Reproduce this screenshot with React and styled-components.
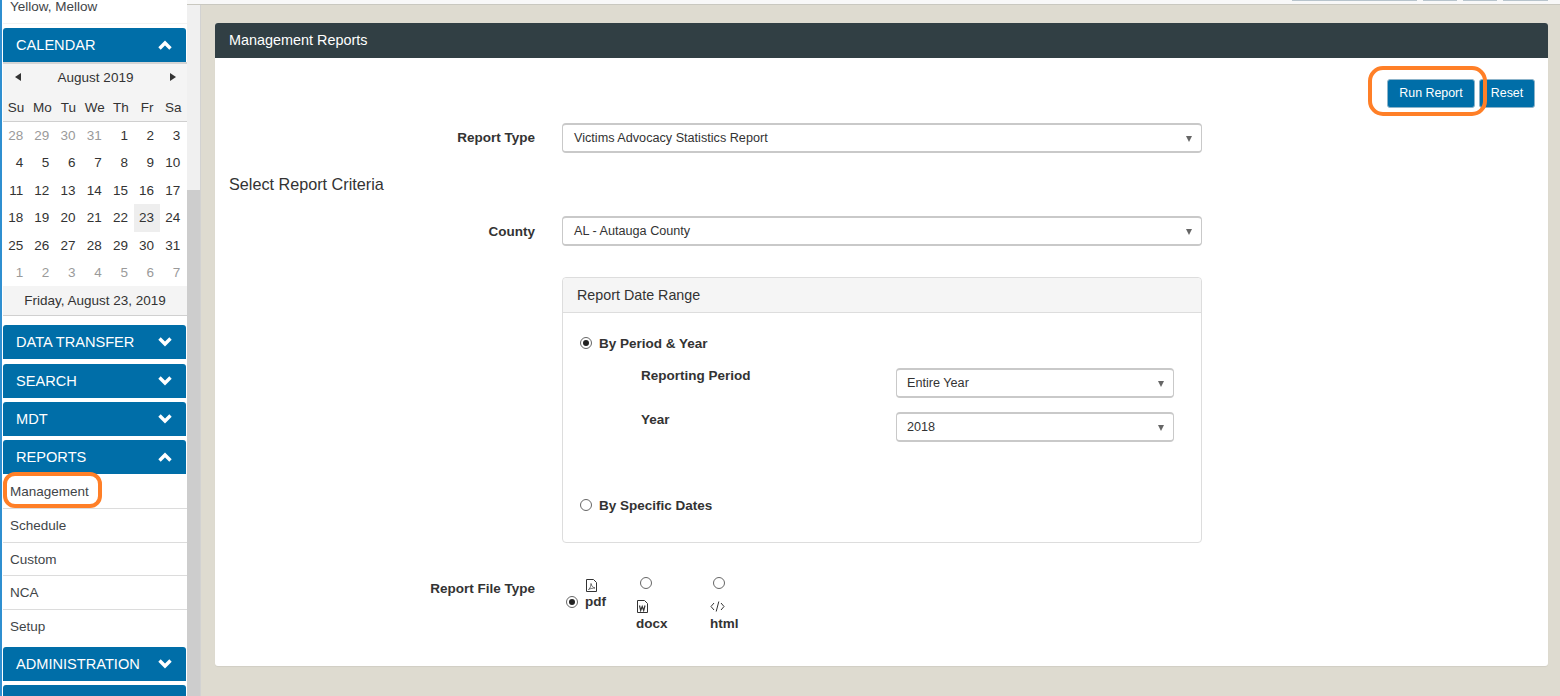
import React from 'react';
import styled, { createGlobalStyle } from 'styled-components';

const Global = createGlobalStyle`
  html, body { margin: 0; padding: 0; height: 696px; overflow: hidden; background: #dedbd0; }
  body { font-family: "Liberation Sans", Arial, sans-serif; font-size: 13.5px; color: #333; }
  * { box-sizing: border-box; }
`;

const Page = styled.div`
  position: relative;
  display: flex;
  width: 1560px;
  height: 696px;
  overflow: hidden;
`;
const Sidebar = styled.aside`
  width: 187px;
  height: 696px;
  flex: none;
  background: #fff;
  border-left: 2px solid #2f8fd0;
  padding-left: 1px;
  overflow: hidden;
`;
const Rail = styled.div`
  width: 14px;
  flex: none;
  height: 696px;
  display: flex;
  flex-direction: column;
  background: #f0f0f0;
  border-right: 1px solid #d2d2d2;
`;
const RailThumb = styled.div`
  margin-top: 190px;
  flex: 1;
  background: #cdcdcd;
`;
const TopItem = styled.div`
  height: 24px;
  margin-bottom: 4px;
  padding: 0 0 0 7px;
  color: #3f4548;
  line-height: 13px;
  border-bottom: 1px solid #f2f2f2;
`;
const Section = styled.div`
  margin-bottom: ${p => p.$gap ?? 4}px;
`;
const SectionHead = styled.div`
  height: 34px;
  margin-right: 1px;
  display: flex;
  align-items: center;
  justify-content: space-between;
  padding: 0 14px 0 13px;
  background: #006ea8;
  color: #fff;
  font-size: 14.6px;
  border-radius: 3px 3px 0 0;
`;
const MenuItem = styled.div`
  height: ${p => p.$h ?? 34}px;
  display: flex;
  align-items: center;
  padding-left: 7px;
  color: #3f4548;
  border-bottom: ${p => (p.$last ? 'none' : '1px solid #dcdcdc')};
`;
const Calendar = styled.div`
  background: #fff;
  height: 254px;
  display: flex;
  flex-direction: column;
  border-top: 2px solid #d4d4d4;
  border-bottom: 1px solid #d0d0d0;
`;
const CalHead = styled.div`
  background: #f4f4f4;
  border-bottom: 1px solid #cfcfcf;
  height: 58px;
  flex: none;
`;
const CalMonth = styled.div`
  height: 26px;
  display: flex;
  align-items: center;
  justify-content: space-between;
  padding: 0 11px 0 12px;
`;
const Caret = styled.span`
  width: 0;
  height: 0;
  border-top: 4px solid transparent;
  border-bottom: 4px solid transparent;
  ${p => (p.$left ? 'border-right: 6px solid #333;' : 'border-left: 6px solid #333;')}
`;
const CalGrid = styled.div`
  display: grid;
  grid-template-columns: repeat(7, 26.2px);
`;
const WeekDay = styled.div`
  height: 29px;
  line-height: 36px;
  text-align: center;
`;
const DayCell = styled.div`
  height: 27.4px;
  line-height: 27.4px;
  text-align: right;
  padding-right: 6px;
  color: ${p => (p.$muted ? '#9a9a9a' : '#333')};
  background: ${p => (p.$on ? '#eeeeee' : 'transparent')};
`;
const CalFoot = styled.div`
  margin-top: auto;
  height: 29px;
  display: flex;
  align-items: center;
  justify-content: center;
  background: #f4f4f4;
`;

const Main = styled.main`
  flex: 1;
  min-width: 0;
  display: flex;
  flex-direction: column;
  padding-right: 12px;
`;
const TopBar = styled.div`
  height: 23px;
  margin: 0 -12px 0 -14px;
`;
const TopStrip = styled.div`
  height: 5px;
  background: #f8f8f8;
  border-bottom: 1px solid #c9c8c0;
  display: flex;
  justify-content: flex-end;
  gap: 6px;
  padding-right: 12px;
`;
const TopBtn = styled.div`
  width: ${p => p.$w}px;
  height: 1px;
  background: #b8c4cc;
`;
const Panel = styled.section`
  margin-left: 14px;
  width: 1333px;
  height: 643px;
  background: #fff;
  border-radius: 3px;
  box-shadow: 0 1px 1px rgba(0, 0, 0, 0.06);
  display: flex;
  flex-direction: column;
`;
const PanelHead = styled.header`
  height: 35px;
  display: flex;
  align-items: center;
  padding: 0 0 2px 14px;
  font-size: 14.4px;
  background: #313f44;
  color: #fff;
  border-radius: 3px 3px 0 0;
`;
const PanelBody = styled.div`
  flex: 1;
  padding: 21px 13px 0 14px;
`;
const Actions = styled.div`
  display: flex;
  justify-content: flex-end;
  gap: 4px;
  height: 29px;
  margin-bottom: 15px;
`;
const Button = styled.button`
  height: 29px;
  width: ${p => p.$w}px;
  padding: 0 0 2px;
  font: 12.4px "Liberation Sans", Arial, sans-serif;
  color: #fff;
  background: #006ea8;
  border: 1px solid #8db4ca;
  border-radius: 3px;
`;
const Row = styled.div`
  display: flex;
  align-items: center;
  height: 30px;
`;
const FieldLabel = styled.label`
  width: 306px;
  padding-bottom: ${p => p.$pb ?? 0}px;
  text-align: right;
  font-weight: 700;
  font-size: 13.5px;
  color: #333;
  flex: none;
`;
const Select = styled.div`
  width: ${p => p.$w}px;
  height: 30px;
  margin-left: ${p => p.$ml ?? 0}px;
  display: flex;
  align-items: center;
  justify-content: space-between;
  padding: 0 9px 0 ${p => p.$pl ?? 11}px;
  font-size: 12.65px;
  color: #333;
  background: #fff;
  border: solid #c9c9c9;
  border-width: 2px 1px;
  border-radius: 4px;
`;
const Arrow = styled.span`
  width: 0;
  height: 0;
  margin-top: 2px;
  border-left: 3.5px solid transparent;
  border-right: 3.5px solid transparent;
  border-top: 6px solid #666;
`;
const Criteria = styled.h3`
  margin: 22px 0 23px;
  font-weight: 400;
  font-size: 16.2px;
  line-height: 18px;
  color: #333;
`;
const RangeBox = styled.div`
  width: 640px;
  height: 266px;
  margin: 31px 0 0 333px;
  border: 1px solid #dddddd;
  border-radius: 4px;
`;
const RangeHead = styled.div`
  height: 35px;
  display: flex;
  align-items: center;
  padding-left: 14px;
  font-size: 14.3px;
  background: #f5f5f5;
  border-bottom: 1px solid #dddddd;
  border-radius: 4px 4px 0 0;
`;
const RangeBody = styled.div`
  padding: 22px 27px 0 17px;
`;
const RadioLine = styled.div`
  display: flex;
  align-items: center;
  gap: 7px;
  height: 16px;
  font-weight: 700;
`;
const Radio = styled.span`
  width: 12px;
  height: 12px;
  flex: none;
  display: ${p => (p.$block ? 'block' : 'flex')};
  margin-left: ${p => p.$ml ?? 0}px;
  border: 1px solid #666;
  border-radius: 50%;
  background: #fff;
  align-items: center;
  justify-content: center;
  &::after {
    content: '';
    width: 6px;
    height: 6px;
    border-radius: 50%;
    background: ${p => (p.$on ? '#222' : 'transparent')};
  }
`;
const SubRow = styled.div`
  display: flex;
  justify-content: space-between;
  height: 30px;
  margin-top: ${p => p.$mt}px;
  padding-left: 61px;
`;
const SubLabel = styled.div`
  font-weight: 700;
  line-height: 16px;
`;
const FileRow = styled.div`
  display: flex;
  margin-top: 31px;
  height: 60px;
`;
const FileLabel = styled(FieldLabel)`
  padding-top: 7px;
`;
const FileOpts = styled.div`
  display: flex;
  flex: 1;
  margin-left: 31px;
`;
const FileOpt = styled.div`
  width: ${p => p.$w}px;
  flex: none;
  padding-top: ${p => p.$top}px;
`;
const FileText = styled.div`
  font-weight: 700;
  line-height: 16px;
`;
const IconSlot = styled.div`
  height: 15px;
  display: flex;
  align-items: center;
  padding-left: ${p => p.$pl ?? 0}px;
  svg { display: block; }
`;
const PdfLine = styled.div`
  display: flex;
  align-items: center;
  gap: 7px;
  height: 16px;
`;
const Spacer = styled.div`
  height: ${p => p.$h}px;
`;
const Ring = styled.div`
  position: absolute;
  left: ${p => p.$x}px;
  top: ${p => p.$y}px;
  width: ${p => p.$w}px;
  height: ${p => p.$h}px;
  border: 4px solid #ff7f27;
  border-radius: ${p => p.$r}px;
  pointer-events: none;
`;

const Chevron = ({ up }) => (
  <svg width="14" height="10" viewBox="0 0 14 10" fill="none" stroke="#fff" strokeWidth="3.4">
    <path d={up ? 'M1.500 8.500L7 3l5.500 5.500' : 'M1.500 1.500L7 7l5.500-5.500'} />
  </svg>
);
const PdfIcon = () => (
  <svg width="11" height="13" viewBox="0 0 11 13" fill="none" stroke="#333" strokeWidth="1">
    <path d="M.5.5h7l3 3v9H.5z" />
    <path d="M2.500 10.500c2-1.500 2.500-4 2.500-6 .5 2.500 2 4 4 4.500-2 0-4.500.5-6.500 1.500z" strokeWidth=".7" />
  </svg>
);
const WordIcon = () => (
  <svg width="11" height="13" viewBox="0 0 11 13" fill="none" stroke="#333" strokeWidth="1">
    <path d="M.5.5h7l3 3v9H.5z" />
    <path d="M2.500 5.500l1.200 5 1.500-4 1.500 4 1.300-5" strokeWidth="1.200" />
  </svg>
);
const CodeIcon = () => (
  <svg width="15" height="11" viewBox="0 0 15 11" fill="none" stroke="#333" strokeWidth="1">
    <path d="M4 2L1 5.500 4 9M11 2l3 3.500L11 9M8.800 .5l-2.600 10" />
  </svg>
);

const rows = [
  [[28,1],[29,1],[30,1],[31,1],[1],[2],[3]],
  [[4],[5],[6],[7],[8],[9],[10]],
  [[11],[12],[13],[14],[15],[16],[17]],
  [[18],[19],[20],[21],[22],[23,0,1],[24]],
  [[25],[26],[27],[28],[29],[30],[31]],
  [[1,1],[2,1],[3,1],[4,1],[5,1],[6,1],[7,1]],
];

const Head = ({ label, open }) => (
  <SectionHead>
    {label}
    <Chevron up={open} />
  </SectionHead>
);

export default function App() {
  return (
    <Page>
      <Global />
      <Sidebar>
        <TopItem>Yellow, Mellow</TopItem>
        <Section $gap={9}>
          <Head label="CALENDAR" open />
          <Calendar>
            <CalHead>
              <CalMonth>
                <Caret $left />
                August 2019
                <Caret />
              </CalMonth>
              <CalGrid>
                {['Su','Mo','Tu','We','Th','Fr','Sa'].map(d => <WeekDay key={d}>{d}</WeekDay>)}
              </CalGrid>
            </CalHead>
            <CalGrid>
              {rows.flat().map(([d, m, on], i) => (
                <DayCell key={i} $muted={m} $on={on}>{d}</DayCell>
              ))}
            </CalGrid>
            <CalFoot>Friday, August 23, 2019</CalFoot>
          </Calendar>
        </Section>
        <Section $gap={5}><Head label="DATA TRANSFER" /></Section>
        <Section><Head label="SEARCH" /></Section>
        <Section><Head label="MDT" /></Section>
        <Section>
          <Head label="REPORTS" open />
          <MenuItem $h={35}>Management</MenuItem>
          <MenuItem>Schedule</MenuItem>
          <MenuItem $h={33}>Custom</MenuItem>
          <MenuItem>NCA</MenuItem>
          <MenuItem $h={33} $last>Setup</MenuItem>
        </Section>
        <Section><Head label="ADMINISTRATION" /></Section>
        <Section><SectionHead /></Section>
      </Sidebar>
      <Rail><RailThumb /></Rail>
      <Main>
        <TopBar>
          <TopStrip>
            <TopBtn $w={125} />
            <TopBtn $w={34} />
            <TopBtn $w={34} />
            <TopBtn $w={45} />
          </TopStrip>
        </TopBar>
        <Panel>
          <PanelHead>Management Reports</PanelHead>
          <PanelBody>
            <Actions>
              <Button $w={88}>Run Report</Button>
              <Button $w={56}>Reset</Button>
            </Actions>
            <Row>
              <FieldLabel $pb={2}>Report Type</FieldLabel>
              <Select $w={640} $ml={27}>Victims Advocacy Statistics Report<Arrow /></Select>
            </Row>
            <Criteria>Select Report Criteria</Criteria>
            <Row>
              <FieldLabel>County</FieldLabel>
              <Select $w={640} $ml={27}>AL - Autauga County<Arrow /></Select>
            </Row>
            <RangeBox>
              <RangeHead>Report Date Range</RangeHead>
              <RangeBody>
                <RadioLine><Radio $on />By Period &amp; Year</RadioLine>
                <SubRow $mt={17}>
                  <SubLabel>Reporting Period</SubLabel>
                  <Select $w={278} $pl={10}>Entire Year<Arrow /></Select>
                </SubRow>
                <SubRow $mt={14}>
                  <SubLabel>Year</SubLabel>
                  <Select $w={278} $pl={10}>2018<Arrow /></Select>
                </SubRow>
                <Spacer $h={55} />
                <RadioLine><Radio />By Specific Dates</RadioLine>
              </RangeBody>
            </RangeBox>
            <FileRow>
              <FileLabel>Report File Type</FileLabel>
              <FileOpts>
                <FileOpt $w={70} $top={4}>
                  <IconSlot $pl={20}><PdfIcon /></IconSlot>
                  <Spacer $h={1} />
                  <PdfLine><Radio $on /><FileText>pdf</FileText></PdfLine>
                </FileOpt>
                <FileOpt $w={74} $top={3}>
                  <Radio $block $ml={4} />
                  <Spacer $h={10} />
                  <IconSlot $pl={1}><WordIcon /></IconSlot>
                  <Spacer $h={2} />
                  <FileText>docx</FileText>
                </FileOpt>
                <FileOpt $w={60} $top={3}>
                  <Radio $block $ml={3} />
                  <Spacer $h={10} />
                  <IconSlot><CodeIcon /></IconSlot>
                  <Spacer $h={2} />
                  <FileText>html</FileText>
                </FileOpt>
              </FileOpts>
            </FileRow>
          </PanelBody>
        </Panel>
      </Main>
      <Ring $x={3} $y={472} $w={99} $h={36} $r={12} />
      <Ring $x={1368} $y={66} $w={119} $h={50} $r={15} />
    </Page>
  );
}
